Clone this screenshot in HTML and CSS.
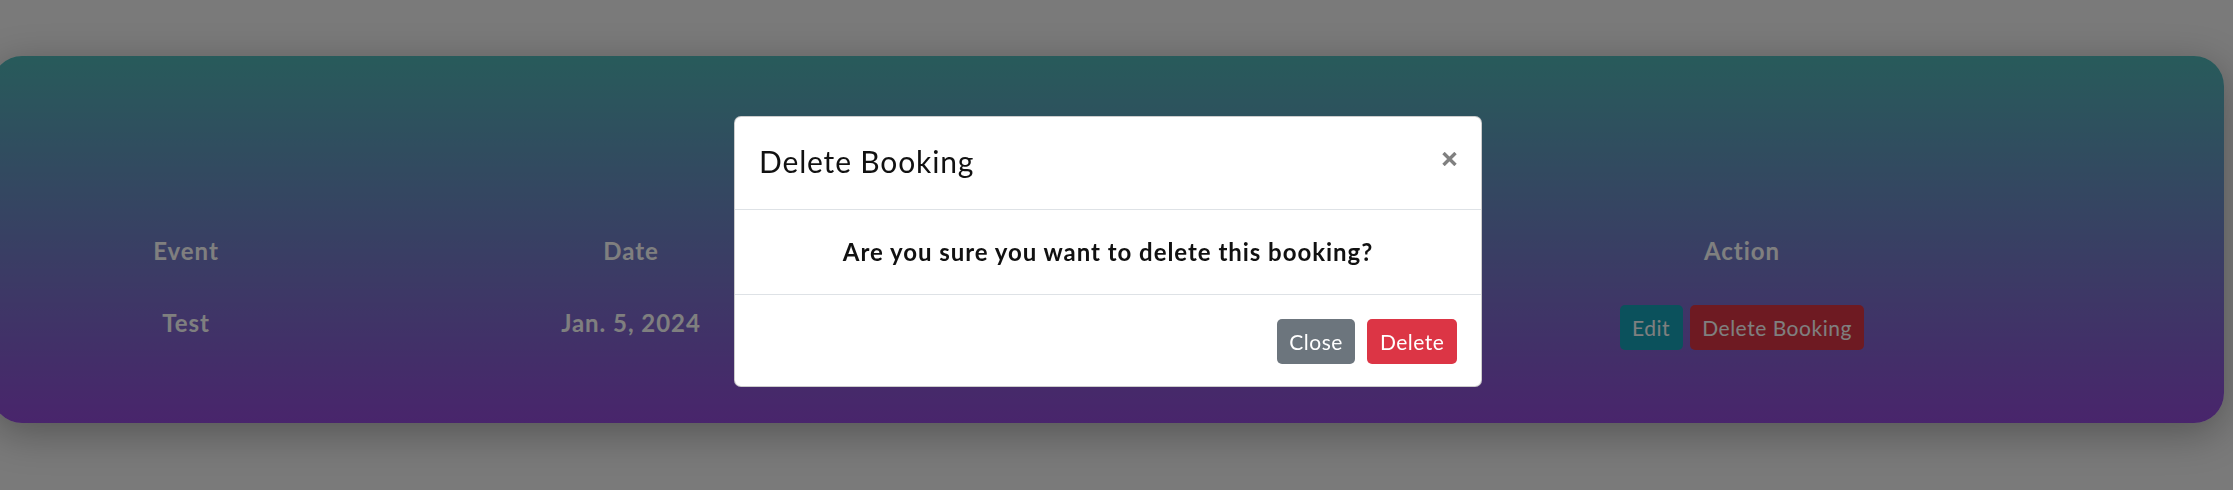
FILE: index.html
```html
<!DOCTYPE html>
<html lang="en">
<head>
<meta charset="utf-8">
<title>My Bookings</title>
<link rel="stylesheet" href="styles.css">
</head>
<body>
<main class="page">
  <section class="card">
    <div class="table">
      <div class="cell th">Event</div>
      <div class="cell th">Date</div>
      <div class="cell th"></div>
      <div class="cell th">Action</div>
      <div class="cell td">Test</div>
      <div class="cell td">Jan. 5, 2024</div>
      <div class="cell td"></div>
      <div class="cell td actions">
        <button class="btn btn-info" type="button">Edit</button>
        <button class="btn btn-danger" type="button">Delete Booking</button>
      </div>
    </div>
  </section>
</main>
<div class="backdrop"></div>
<div class="modal">
  <div class="modal-dialog">
    <div class="modal-header">
      <h5 class="modal-title">Delete Booking</h5>
      <button class="close" type="button" aria-label="Close">
        <svg width="15" height="14" viewBox="0 0 15 14"><path d="M1.5 1 L13.5 13 M13.5 1 L1.5 13" stroke="#808080" stroke-width="3.4" fill="none"/></svg>
      </button>
    </div>
    <div class="modal-body">
      <p>Are you sure you want to delete this booking?</p>
    </div>
    <div class="modal-footer">
      <button class="btn btn-secondary" type="button">Close</button>
      <button class="btn btn-danger" type="button">Delete</button>
    </div>
  </div>
</div>
</body>
</html>
```

FILE: styles.css
```css
* { box-sizing: border-box; }
html, body { margin: 0; }
body {
  width: 2233px;
  height: 490px;
  overflow: hidden;
  background: #f4f4f4;
  font-family: Lato, "Noto Sans", sans-serif;
  color: #212529;
}
.page { padding-top: 56px; }
.card {
  margin: 0 9px 0 -8px;
  padding: 159px 40px 55px;
  border-radius: 30px;
  background: linear-gradient(to bottom, #50b6b6, #924ad8);
  box-shadow: 0 10px 40px rgba(0, 0, 0, 0.3);
  color: #fff;
}
.table {
  display: grid;
  grid-template-columns: 308px 582px 612px 416px;
  font-size: 24px;
  font-weight: 700;
  line-height: 36px;
  letter-spacing: 0.04em;
}
.cell { padding: 18px 0; text-align: center; }
.actions { display: flex; justify-content: center; gap: 7px; letter-spacing: 0; }
.btn {
  display: inline-flex;
  align-items: center;
  justify-content: center;
  height: 45px;
  padding: 0 12.5px;
  border: 0;
  border-radius: 5px;
  font-family: inherit;
  font-size: 21px;
  font-weight: 400;
  line-height: 1;
  letter-spacing: 0.025em;
  color: #fff;
}
.btn-info { background: #17a2b8; }
.btn-danger { background: #dc3545; }
.btn-secondary { background: #6c757d; }
.backdrop {
  position: fixed;
  inset: 0;
  background: rgba(0, 0, 0, 0.5);
}
.modal {
  position: fixed;
  top: 0;
  left: 0;
  right: 17px;
  bottom: 0;
  display: flex;
  justify-content: center;
  align-items: flex-start;
  padding-top: 116px;
}
.modal-dialog {
  width: 748px;
  background: #fff;
  border: 1px solid rgba(0, 0, 0, 0.2);
  border-radius: 7px;
}
.modal-header {
  display: flex;
  justify-content: space-between;
  align-items: flex-start;
  padding: 22px 24px 25px;
  border-bottom: 1px solid #dee2e6;
}
.modal-title {
  margin: 0;
  font-size: 30px;
  font-weight: 400;
  line-height: 45px;
  letter-spacing: 0.028em;
  color: #111;
}
.close {
  margin-top: 13px;
  padding: 0;
  border: 0;
  background: none;
  line-height: 0;
}
.modal-body { padding: 24px; }
.modal-body p {
  margin: 0;
  text-align: center;
  font-size: 24px;
  font-weight: 700;
  line-height: 36px;
  letter-spacing: 0.04em;
  color: #111;
}
.modal-footer {
  display: flex;
  justify-content: flex-end;
  gap: 12px;
  padding: 24px 24px 22px;
  border-top: 1px solid #dee2e6;
}
```
